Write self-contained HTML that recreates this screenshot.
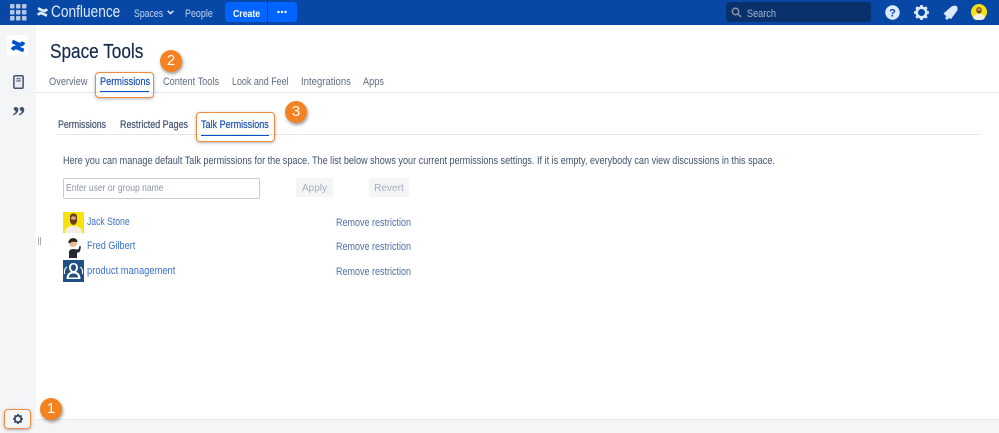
<!DOCTYPE html>
<html><head><meta charset="utf-8">
<style>
html,body{margin:0;padding:0;background:#fff}
#p{position:relative;width:999px;height:433px;overflow:hidden;background:#fff;font-family:"Liberation Sans",sans-serif;color:#42526e;filter:blur(.3px)}
#p div{position:absolute;white-space:nowrap}
.t{font-size:11px;line-height:14px;transform:scaleX(calc(var(--s,.87)*.955));transform-origin:0 0}
.l{color:#3a70cc}
.sub{-webkit-text-stroke:.2px currentColor}
.badge{width:22px;height:22px;border-radius:50%;background:#f58220;color:#fff;font-size:15px;line-height:22px;text-align:center;box-shadow:1px 2px 3px rgba(0,0,0,.4)}
.box{border:1.5px solid #f08a3c;border-radius:4px;box-shadow:0 1px 3px rgba(0,0,0,.3);box-sizing:border-box}
svg{position:absolute}
</style></head><body><div id="p">
<div style="left:0;top:0;width:999px;height:25px;background:#0747a6"></div>
<svg style="left:10px;top:4px" width="17" height="17" viewBox="0 0 17 17" fill="#b3c5e3"><rect x="0" y="0" width="4.5" height="4.5" rx=".8"/><rect x="6" y="0" width="4.5" height="4.5" rx=".8"/><rect x="12" y="0" width="4.5" height="4.5" rx=".8"/><rect x="0" y="6" width="4.5" height="4.5" rx=".8"/><rect x="6" y="6" width="4.5" height="4.5" rx=".8"/><rect x="12" y="6" width="4.5" height="4.5" rx=".8"/><rect x="0" y="12" width="4.5" height="4.5" rx=".8"/><rect x="6" y="12" width="4.5" height="4.5" rx=".8"/><rect x="12" y="12" width="4.5" height="4.5" rx=".8"/></svg>
<svg style="left:37px;top:7px" width="11" height="10" viewBox="0 0 22 20" fill="none" stroke="#deebff" stroke-width="5.5"><path d="M2 16C7 8 13 15 20 17M2 3c7 2 13 9 18 1"/></svg>
<div class="t" style="--s:.886;left:51px;top:3px;font-size:16.2px;line-height:18px;color:#deebff">Confluence</div>
<div class="t" style="--s:.83;left:134px;top:7px;color:#c5d5ee">Spaces</div>
<svg style="left:167px;top:10px" width="7" height="5" viewBox="0 0 7 5" fill="none" stroke="#deebff" stroke-width="1.5"><path d="M.7 .8L3.5 3.6 6.3 .8"/></svg>
<div class="t" style="--s:.85;left:185px;top:7px;color:#c5d5ee">People</div>
<div style="left:225px;top:2px;width:42px;height:20px;background:#0065ff;border-radius:3px 0 0 3px"></div>
<div style="left:268px;top:2px;width:29px;height:20px;background:#0065ff;border-radius:0 3px 3px 0"></div>
<div class="t" style="left:233px;top:6.500px;font-size:10.5px;font-weight:bold;color:#fff">Create</div>
<svg style="left:277px;top:10px" width="10" height="4" fill="#fff"><circle cx="1.5" cy="2" r="1.2"/><circle cx="5" cy="2" r="1.2"/><circle cx="8.5" cy="2" r="1.2"/></svg>
<div style="left:726px;top:2px;width:145px;height:20px;background:#09326c;border-radius:3px"></div>
<svg style="left:731px;top:7px" width="11" height="11" viewBox="0 0 11 11" fill="none" stroke="#8993a4" stroke-width="1.5"><circle cx="4.5" cy="4.5" r="3.2"/><path d="M7 7l3 3"/></svg>
<div class="t" style="left:747px;top:6.500px;color:#a5b8d8">Search</div>
<svg style="left:885px;top:5px" width="15" height="15" viewBox="0 0 15 15"><circle cx="7.5" cy="7.5" r="7.2" fill="#deebff"/><text x="7.5" y="11.5" text-anchor="middle" font-size="11" font-weight="bold" font-family="Liberation Sans" fill="#0747a6">?</text></svg>
<svg style="left:914px;top:5px" width="15" height="15" viewBox="0 0 15 15"><circle cx="7.5" cy="7.5" r="4.8" fill="none" stroke="#deebff" stroke-width="2.6"/><g stroke="#deebff" stroke-width="2.6"><path d="M7.5 0v3M7.5 12v3M0 7.5h3M12 7.5h3M2.2 2.2l2 2M10.8 10.8l2 2M2.2 12.8l2-2M10.8 4.2l2-2"/></g></svg>
<svg style="left:943px;top:5px" width="15" height="15" viewBox="0 0 15 15" fill="#deebff"><path d="M.5 8.5L8.5 1.5Q12 0 13.5 1t.8 4.5L8 14Q4 12.5 .5 8.5z"/><circle cx="4" cy="13" r="1.6"/></svg>
<svg style="left:971px;top:4px" width="16" height="16" viewBox="0 0 16 16"><circle cx="8" cy="8" r="8" fill="#f6e20f"/><path d="M2 14c1-3.500 3-4 6-4s5 .5 6 4A8 8 0 0 1 2 14z" fill="#f3efe6"/><circle cx="8" cy="6" r="2.800" fill="#b97f52"/><path d="M5.500 5.500c0-3 5-3 5 0v2c-1 2.500-4 2.500-5 0z" fill="#6b3d21"/><ellipse cx="8" cy="5.500" rx="1.900" ry="1.300" fill="#d09b70"/></svg>

<div style="left:0;top:25px;width:36px;height:408px;background:#f4f5f7"></div>
<div style="left:7px;top:35px;width:21px;height:21px;background:#fff;border-radius:2px"></div>
<svg style="left:11px;top:39px" width="14" height="14" viewBox="0 0 22 20" fill="none" stroke="#0052cc" stroke-width="6"><path d="M2 16C7 8 13 15 20 17M2 3c7 2 13 9 18 1"/></svg>
<svg style="left:13px;top:75px" width="11" height="14" viewBox="0 0 10 13"><rect x=".7" y=".7" width="8.600" height="11.600" rx="1" fill="#ebecf0" stroke="#42526e" stroke-width="1.400"/><path d="M3 3.500h4M3 5.500h4" stroke="#42526e"/></svg>
<div style="left:12px;top:104px;font-size:27px;line-height:24px;font-weight:bold;font-family:'Liberation Serif',serif;color:#42526e;letter-spacing:-1px">”</div>
<div style="left:38px;top:237px;width:1px;height:8px;background:#a5adba"></div><div style="left:40px;top:237px;width:1px;height:8px;background:#a5adba"></div>

<div class="t" style="--s:.905;left:50px;top:41px;font-size:19.9px;line-height:22px;color:#172b4d;-webkit-text-stroke:.2px #172b4d">Space Tools</div>
<div class="t" style="--s:.88;left:49px;top:75px;color:#5e6c84">Overview</div>
<div class="t sub" style="--s:.875;left:100px;top:75px;color:#1b50b3">Permissions</div>
<div style="left:100px;top:91px;width:49px;height:2px;background:#0052cc"></div>
<div class="t" style="--s:.875;left:163px;top:75px;color:#5e6c84">Content Tools</div>
<div class="t" style="--s:.85;left:232px;top:75px;color:#5e6c84">Look and Feel</div>
<div class="t" style="--s:.91;left:301px;top:75px;color:#5e6c84">Integrations</div>
<div class="t" style="--s:.875;left:363px;top:75px;color:#5e6c84">Apps</div>
<div style="left:36px;top:92px;width:963px;height:1px;background:#e4e6ea"></div>
<div class="box" style="left:95px;top:72px;width:59px;height:26px"></div>
<div class="badge" style="left:160px;top:50px">2</div>

<div class="t sub" style="--s:.84;left:58px;top:118px">Permissions</div>
<div class="t sub" style="--s:.85;left:120px;top:118px">Restricted Pages</div>
<div class="t sub" style="--s:.86;left:201px;top:118px;color:#1b50b3">Talk Permissions</div>
<div style="left:201px;top:134px;width:68px;height:2px;background:#0052cc"></div>
<div style="left:56px;top:134px;width:925px;height:1px;background:#e4e6ea"></div>
<div class="box" style="left:196px;top:112px;width:79px;height:30px"></div>
<div class="badge" style="left:285px;top:101px">3</div>

<div class="t" style="--s:.866;left:63px;top:154px">Here you can manage default Talk permissions for the space. The list below shows your current permissions settings. If it is empty, everybody can view discussions in this space.</div>
<div style="left:63px;top:178px;width:197px;height:21px;box-sizing:border-box;border:1px solid #c6cad2;border-radius:2px;background:#fff"></div>
<div class="t" style="--s:.87;left:66px;top:182px;color:#8d94a1;font-size:10.3px">Enter user or group name</div>
<div style="left:296px;top:178px;width:37px;height:19px;background:#f4f5f7;border-radius:2px;text-align:center;font-size:10px;line-height:21px;color:#a5adba">Apply</div>
<div style="left:369px;top:178px;width:40px;height:19px;background:#f4f5f7;border-radius:2px;text-align:center;font-size:10px;line-height:21px;color:#a5adba">Revert</div>

<svg style="left:63px;top:212px" width="21" height="21" viewBox="0 0 21 21"><rect width="21" height="21" fill="#f6e20f"/><path d="M2 21c0-5 3-7 8.500-7s8.500 2 8.500 7z" fill="#f3efe6"/><circle cx="10.500" cy="6.500" r="3.600" fill="#c98f62"/><path d="M7 4.500c0-4 7-4 7 0v5c-1.500 4.500-5.500 4.500-7 0z" fill="#6b3d21"/><ellipse cx="10.500" cy="6" rx="2.600" ry="1.800" fill="#d9a77c"/></svg>
<div class="t l" style="--s:.82;left:87px;top:215px">Jack Stone</div>
<svg style="left:63px;top:236px" width="21" height="22" viewBox="0 0 21 22"><path d="M6 22v-6c0-2 2-3 4.500-3s3 1 5 0l1-3 1.500.5-1 5-3 1.500V22z" fill="#232a35"/><circle cx="10" cy="7" r="4" fill="#e8bd98"/><path d="M5.500 7c-.5-6 9-6.500 9-1-3 0-6-1-7 1z" fill="#2a2320"/></svg>
<div class="t l" style="--s:.87;left:87px;top:239px">Fred Gilbert</div>
<svg style="left:63px;top:260px" width="21" height="22" viewBox="0 0 21 22"><rect width="21" height="22" fill="#205081"/><path d="M3.500 19c0-5 2.500-6.500 4.500-7-1.500-1.500-2-3-2-4.500 0-3 2-4.500 4.500-4.500S15 4.500 15 7.500c0 1.500-.5 3-2 4.500 2 .5 4.500 2 4.500 7z" fill="#fff"/><path d="M6 17.500c0-3 2-4 4.500-4s4.500 1 4.500 4z M8 7.500c0-2 1-3 2.500-3S13 5.500 13 7.500 12 11 10.500 11 8 9.500 8 7.500z" fill="#205081"/><path d="M1.500 14c-.5-4 .5-6 2.500-7M19.500 14c.5-4-.5-6-2.500-7" fill="none" stroke="#fff" stroke-width="1.200"/></svg>
<div class="t l" style="--s:.89;left:87px;top:264px">product management</div>
<div class="t" style="--s:.857;left:336px;top:216px;color:#4f6fa5">Remove restriction</div>
<div class="t" style="--s:.857;left:336px;top:240px;color:#4f6fa5">Remove restriction</div>
<div class="t" style="--s:.857;left:336px;top:265px;color:#4f6fa5">Remove restriction</div>

<div style="left:36px;top:419px;width:963px;height:14px;background:#f4f5f7;border-top:1px solid #e9ebef;box-sizing:border-box"></div>
<div class="box" style="left:4px;top:409px;width:27px;height:20px"></div>
<svg style="left:13px;top:414px" width="10" height="10" viewBox="0 0 15 15"><circle cx="7.500" cy="7.500" r="4.800" fill="none" stroke="#344563" stroke-width="2.600"/><g stroke="#344563" stroke-width="2.600"><path d="M7.500 0v3M7.500 12v3M0 7.500h3M12 7.500h3M2.200 2.200l2 2M10.800 10.800l2 2M2.200 12.800l2-2M10.800 4.200l2-2"/></g></svg>
<div class="badge" style="left:40px;top:398px">1</div>
</div></body></html>
